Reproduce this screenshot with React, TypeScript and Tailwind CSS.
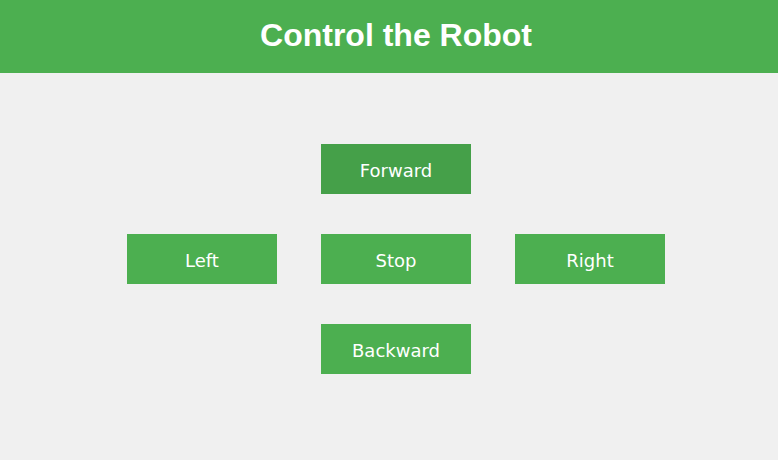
export default function App() {
  const btn =
    "w-[150px] h-[50px] bg-[#4caf50] text-white text-[18px] pt-[2px] flex items-center justify-center";

  return (
    <div className="min-h-[460px] bg-[#f0f0f0] font-['DejaVu_Sans',sans-serif]">
      <header className="h-[73px] bg-[#4caf50] flex items-center justify-center pl-[14px] pb-[4px]">
        <h1 className="text-white text-[32px] font-bold font-['Liberation_Sans',Arial,sans-serif]">
          Control the Robot
        </h1>
      </header>

      <main className="flex flex-col items-center gap-10 pt-[71px] pl-[14px]">
        <button className={`${btn} bg-[#45a049]`}>Forward</button>
        <div className="flex gap-[44px]">
          <button className={btn}>Left</button>
          <button className={btn}>Stop</button>
          <button className={btn}>Right</button>
        </div>
        <button className={btn}>Backward</button>
      </main>
    </div>
  );
}
